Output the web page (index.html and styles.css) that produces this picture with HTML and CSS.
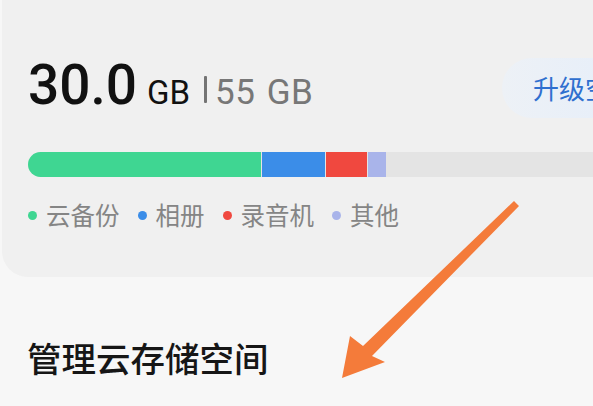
FILE: index.html
```html
<!DOCTYPE html>
<html lang="zh">
<head>
<meta charset="utf-8">
<link rel="stylesheet" href="styles.css">
</head>
<body>
<div class="page">
  <section class="card">
    <div class="head">
      <div class="usage">
        <span class="used">30.0</span>
        <span class="unit">GB</span>
        <span class="sep"></span>
        <span class="total">55 GB</span>
      </div>
      <div class="upgrade">升级空间</div>
    </div>
    <div class="bar">
      <span class="seg green" style="width:233px"></span>
      <span class="seg blue" style="width:63px"></span>
      <span class="seg red" style="width:41px"></span>
      <span class="seg lav" style="width:18px"></span>
    </div>
    <div class="legend">
      <span class="item"><i class="dot green"></i>云备份</span>
      <span class="item"><i class="dot blue"></i>相册</span>
      <span class="item"><i class="dot red"></i>录音机</span>
      <span class="item"><i class="dot lav"></i>其他</span>
    </div>
  </section>
  <h2 class="title">管理云存储空间</h2>
  <svg class="arrow" width="593" height="406" viewBox="0 0 593 406">
    <polygon points="342,378 350,336 363,346 514,201 519,206 372,356 385,362" fill="#f47b3a"/>
  </svg>
</div>
</body>
</html>
```

FILE: styles.css
```css
html, body {
  margin: 0;
  padding: 0;
}
body {
  width: 593px;
  height: 406px;
  overflow: hidden;
  background: #f7f7f7;
  font-family: Roboto, "Noto Sans CJK SC", sans-serif;
}
.page {
  position: relative;
  width: 593px;
  height: 406px;
  overflow: hidden;
}
.card {
  margin: -30px 0 0 2px;
  width: 680px;
  box-sizing: border-box;
  padding: 88px 0 47px 26px;
  background: #f0f0f0;
  border-radius: 26px;
}
.head {
  display: flex;
  align-items: center;
  height: 60px;
}
.usage {
  display: flex;
  align-items: baseline;
  color: #111;
  margin-top: -6px;
}
.used {
  font-size: 55px;
  font-weight: 500;
  line-height: 60px;
}
.unit {
  font-size: 33px;
  font-weight: 400;
  margin-left: 10px;
  color: #111;
}
.sep {
  width: 3px;
  height: 27px;
  background: #747474;
  margin: 0 8px 12px 14px;
  align-self: flex-end;
  border-radius: 1px;
}
.total {
  font-size: 35px;
  color: #777;
  letter-spacing: 0.5px;
  word-spacing: 2px;
}
.upgrade {
  margin-left: auto;
  width: 180px;
  height: 60px;
  box-sizing: border-box;
  padding-left: 31px;
  border-radius: 30px;
  background: linear-gradient(90deg, #edf1f6 0%, #e3edfb 100%);
  color: #2f6fcf;
  font-family: "Noto Sans CJK SC", sans-serif;
  font-size: 26px;
  line-height: 60px;
}
.bar {
  display: flex;
  margin-top: 34px;
  height: 25px;
  width: 640px;
  background: #e4e4e4;
  border-radius: 13px;
  overflow: hidden;
}
.seg {
  height: 25px;
  margin-right: 1px;
}
.green { background: #3fd692; }
.blue { background: #3b8de8; }
.red { background: #f0483f; }
.lav { background: #a9b4ea; }
.legend {
  display: flex;
  gap: 18px;
  margin-top: 23px;
  height: 30px;
  align-items: center;
}
.item {
  display: flex;
  align-items: center;
  color: #858585;
  font-family: "Noto Sans CJK SC", sans-serif;
  font-size: 24.5px;
  line-height: 30px;
}
.dot {
  width: 9px;
  height: 9px;
  border-radius: 50%;
  margin-right: 9px;
  display: inline-block;
}
.title {
  margin: 60px 0 0 27px;
  font-family: "Noto Sans CJK SC", sans-serif;
  font-size: 34.5px;
  font-weight: 500;
  line-height: 40px;
  color: #161616;
}
.arrow {
  position: absolute;
  left: 0;
  top: 0;
  pointer-events: none;
}
```
